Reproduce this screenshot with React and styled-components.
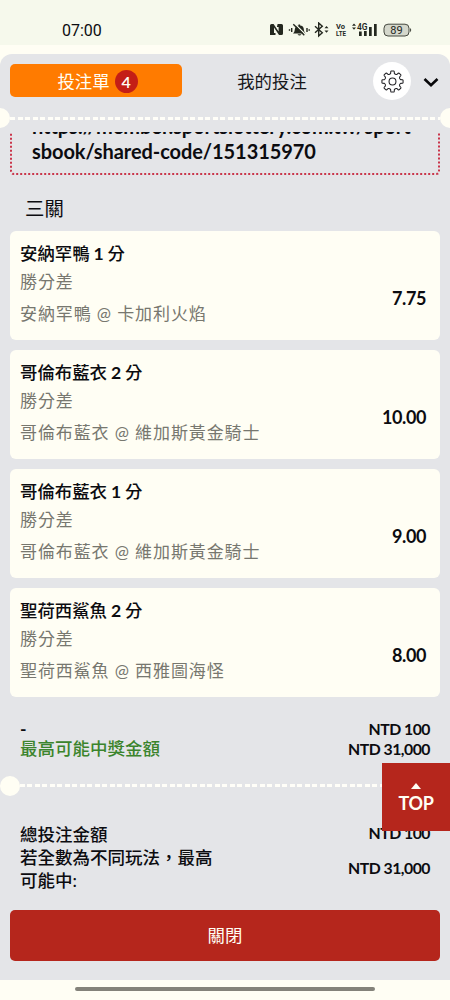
import React from 'react';
import styled, { createGlobalStyle } from 'styled-components';

const BETS = [
  { team: '安納罕鴨', margin: 1, match: '安納罕鴨 @ 卡加利火焰', odds: '7.75' },
  { team: '哥倫布藍衣', margin: 2, match: '哥倫布藍衣 @ 維加斯黃金騎士', odds: '10.00' },
  { team: '哥倫布藍衣', margin: 1, match: '哥倫布藍衣 @ 維加斯黃金騎士', odds: '9.00' },
  { team: '聖荷西鯊魚', margin: 2, match: '聖荷西鯊魚 @ 西雅圖海怪', odds: '8.00' },
];

const GlobalStyle = createGlobalStyle`
  * {
    box-sizing: border-box;
  }
  body {
    margin: 0;
    background: #fffef4;
    color: #0c0c10;
    font-family: Lato, "Noto Sans CJK TC", sans-serif;
  }
`;

const Screen = styled.div`
  width: 450px;
  height: 1000px;
  overflow: hidden;
  position: relative;
  display: flex;
  flex-direction: column;
`;

const StatusBar = styled.div`
  height: 45px;
  flex: none;
  padding: 15px 38px 0 62px;
  display: flex;
  justify-content: space-between;
  background: #f6f9ec;
`;

const Clock = styled.span`
  font: 16px/31px Roboto, sans-serif;
`;

const StatusSvg = styled.svg`
  margin-top: 7px;
  font-family: Roboto, sans-serif;
`;

const Panel = styled.main`
  height: 926px;
  flex: none;
  margin-top: 9px;
  border-radius: 12px 12px 0 0;
  background: #e4e5e8;
  display: flex;
  flex-direction: column;
`;

const Tabs = styled.div`
  height: 54px;
  flex: none;
  padding: 10px 10px 0;
  display: flex;
`;

const Tab = styled.button`
  width: ${props => (props.$active ? 172 : 180)}px;
  height: 33px;
  padding: ${props => (props.$active ? '1px 0 0 3px' : '1px 0 0')};
  border: 0;
  border-radius: 5px;
  display: flex;
  align-items: center;
  justify-content: center;
  gap: 5px;
  background: ${props => (props.$active ? '#ff7b00' : 'transparent')};
  color: ${props => (props.$active ? '#fffef4' : '#16161a')};
  font-family: inherit;
  font-size: 17.4px;
  line-height: 33px;
`;

const Count = styled.span`
  width: 23px;
  height: 23px;
  border-radius: 50%;
  background: #c41e16;
  font-size: 16px;
  font-weight: 600;
  line-height: 23px;
  text-align: center;
`;

const Settings = styled.button`
  width: 38px;
  height: 38px;
  margin: -2px 0 0 11px;
  padding: 0;
  border: 0;
  border-radius: 50%;
  background: #fff;
  display: flex;
  align-items: center;
  justify-content: center;
`;

const Chevron = styled.svg`
  margin: 13px 0 0 12px;
`;

const Divider = styled.div`
  height: 20px;
  flex: none;
  margin: ${props => (props.$inset ? '17px 0 0' : '0 -10px')};
  display: flex;
  align-items: center;
`;

const Notch = styled.span`
  width: 20px;
  height: 20px;
  flex: none;
  border-radius: 50%;
  background: #fffef4;
`;

const Dashes = styled.span`
  height: 3px;
  flex: 1;
  background: repeating-linear-gradient(90deg, #fffef8 0 5px, transparent 5px 7.5px);
`;

const ShareClip = styled.div`
  height: 43px;
  flex: none;
  margin: 4px 10px 0;
  overflow: hidden;
  display: flex;
  align-items: flex-end;
`;

const ShareBox = styled.div`
  width: 430px;
  border: 2px dotted #c9354a;
  border-radius: 4px;
  padding: 0 19px 10px 20px;
  font-size: 20px;
  font-weight: 700;
  letter-spacing: -0.08px;
  line-height: 24.5px;
  white-space: pre;
`;

const Heading = styled.h2`
  height: 55.9px;
  flex: none;
  margin: 0;
  padding: 6px 25px 0;
  font-size: 19.4px;
  font-weight: 400;
  line-height: 56px;
`;

const BetList = styled.div`
  flex: none;
  padding: 0 10px;
  display: flex;
  flex-direction: column;
  gap: 9.9px;
`;

const BetCard = styled.article`
  height: 109px;
  padding: 8px 14px 0 10px;
  border-radius: 6px;
  background: #fffef4;
  display: flex;
  justify-content: space-between;
`;

const Pick = styled.div`
  font-size: 17.4px;
  font-weight: 500;
  line-height: 30px;
`;

const Margin = styled.span`
  margin: 0 -0.5px;
  font-size: 17.6px;
  font-weight: 700;
`;

const Market = styled.div`
  color: #77776f;
  font-size: 17px;
  letter-spacing: 0.9px;
  line-height: 26px;
`;

const Match = styled(Market)`
  line-height: 37px;
`;

const Odds = styled.div`
  padding-top: 44px;
  font-size: 18px;
  font-weight: 700;
  letter-spacing: -0.4px;
  line-height: 30px;
`;

const Totals = styled.div`
  flex: none;
  padding: ${props => props.$top}px 20px 0;
  display: flex;
  justify-content: space-between;
  font-size: 17.5px;
  font-weight: 500;
  line-height: ${props => props.$line}px;
`;

const Labels = styled.div`
  width: 200px;
`;

const Dash = styled.div`
  font-weight: 700;
`;

const Green = styled.div`
  color: #3b842c;
`;

const Amounts = styled.div`
  display: flex;
  flex-direction: column;
  gap: ${props => props.$gap || 0}px;
  font-size: 15.8px;
  font-weight: 700;
  letter-spacing: -0.5px;
  line-height: 20px;
  text-align: right;
`;

const CloseButton = styled.button`
  height: 51px;
  flex: none;
  margin: auto 10px 19px;
  padding: 0 0 2px;
  border: 0;
  border-radius: 5px;
  background: #b5261c;
  color: #fffef4;
  font-family: inherit;
  font-size: 17.4px;
`;

const TopButton = styled.button`
  position: absolute;
  top: 763px;
  right: 0;
  width: 68px;
  height: 68px;
  padding: 20px 0 0;
  border: 0;
  background: #b5261c;
  color: #fffef4;
  display: flex;
  flex-direction: column;
  align-items: center;
  justify-content: flex-start;
  gap: 3px;
  font-family: inherit;
  font-size: 18px;
  font-weight: 700;
  letter-spacing: -0.4px;
  line-height: 22px;
`;

const HomeBar = styled.div`
  width: 300px;
  height: 4px;
  margin: 7px auto 0;
  border-radius: 2px;
  background: #84827a;
`;

const StatusIcons = () => (
  <StatusSvg width="142" height="16" viewBox="0 0 142 16" fill="#24281f">
    <path d="M0 3.5Q0 2 1.5 2H3.6l5 7.500V5H7V3.500h3.500V13H9L4 5.500V11h1.500v2H0zM7.500 2h4q1.500 0 1.500 1.500v8q0 1.500-1.500 1.500h-1V3.500h-3z" />
    <path d="M23 11.5c2-1.500 1.500-3.500 2-5 .6-2 2-3 3.500-3V2.500h1.600v1c2 0 3.200 1.200 3.600 3 .4 2 .1 3.500 2 5zM27.500 12.300h4q-2 2.400-4 0z" />
    <path d="m24.500 1.500 11 11" stroke="#f6f9ec" strokeWidth="1.2" />
    <path d="m23.300 2.300 11 11M21.700 6v4M19.500 7.300v1.400M37 6v4M39.200 7.300v1.400" fill="none" stroke="#24281f" strokeWidth="1.4" />
    <path d="m45 4.200 7.300 6.600-3.600 3.200V1l3.600 3.200L45 10.800" fill="none" stroke="#24281f" strokeWidth="1.4" />
    <path d="m54.500 6.300 2-2.300 2 2.300zM54.500 8.500h4l-2 2.300z" />
    <text x="66" y="6.500" fontSize="8" fontWeight="700" textLength="9" lengthAdjust="spacingAndGlyphs">Vo</text>
    <text x="66" y="14" fontSize="8" fontWeight="700" textLength="10" lengthAdjust="spacingAndGlyphs">LTE</text>
    <path d="m82 3.800 2-2.300 2 2.300zM82 5.500h4l-2 2.300zM89 9.500h2.700V14H89zM94 9h2.700v5H94zM99 5h2.700v9H99zM104 2h2.700v12H104z" />
    <text x="87" y="7.800" fontSize="9.500" fontWeight="600" textLength="10.500" lengthAdjust="spacingAndGlyphs">4G</text>
    <rect x="114" y="2.200" width="25" height="11.800" rx="4" fill="#d4d7cb" stroke="#45483f" />
    <path d="M140.200 6q2 2.100 0 4.200z" />
    <text x="126.500" y="12" fontSize="11" textAnchor="middle">89</text>
  </StatusSvg>
);

const Gear = () => (
  <svg width="23" height="23" viewBox="-12 -12 24 24" fill="none" stroke="#222226" strokeWidth="1.1" strokeLinejoin="round">
    <path
      d={[0, 45, 90, 135, 180, 225, 270, 315]
        .map((deg, i) => {
          const at = (r, a) => {
            const t = ((deg + a) * Math.PI) / 180;
            return `${(r * Math.sin(t)).toFixed(2)} ${(-r * Math.cos(t)).toFixed(2)}`;
          };
          return `${i ? 'L' : 'M'}${at(8.7, -13)} L${at(10.5, -10)} Q${at(11, -9)} ${at(11.1, -7)} L${at(11.1, 7)} Q${at(11, 9)} ${at(10.5, 10)} L${at(8.7, 13)} Q${at(7.6, 22.5)} ${at(8.7, 32)}`;
        })
        .join(' ') + 'Z'}
    />
    <circle r="3.6" />
  </svg>
);

const App = () => (
  <>
    <GlobalStyle />
    <Screen>
      <StatusBar>
        <Clock>07:00</Clock>
        <StatusIcons />
      </StatusBar>
      <Panel>
        <Tabs>
          <Tab $active>投注單<Count>4</Count></Tab>
          <Tab>我的投注</Tab>
          <Settings><Gear /></Settings>
          <Chevron width="16" height="11" viewBox="0 0 16 11" fill="none" stroke="#08080a" strokeWidth="2.6">
            <path d="m1.500 2 6.500 6.300L14.500 2" />
          </Chevron>
        </Tabs>
        <Divider>
          <Notch />
          <Dashes />
          <Notch />
        </Divider>
        <ShareClip>
          <ShareBox>{'https://member.sportslottery.com.tw/sport\nsbook/shared-code/151315970'}</ShareBox>
        </ShareClip>
        <Heading>三關</Heading>
        <BetList>
          {BETS.map(bet => (
            <BetCard key={bet.team + bet.margin}>
              <div>
                <Pick>{bet.team} <Margin>{bet.margin}</Margin> 分</Pick>
                <Market>勝分差</Market>
                <Match>{bet.match}</Match>
              </div>
              <Odds>{bet.odds}</Odds>
            </BetCard>
          ))}
        </BetList>
        <Totals $top={22} $line={20}>
          <Labels>
            <Dash>-</Dash>
            <Green>最高可能中獎金額</Green>
          </Labels>
          <Amounts>
            <div>NTD 100</div>
            <div>NTD 31,000</div>
          </Amounts>
        </Totals>
        <Divider $inset>
          <Notch />
          <Dashes />
          <Notch />
        </Divider>
        <Totals $top={27} $line={23}>
          <Labels>
            <div>總投注金額</div>
            <div>若全數為不同玩法，最高可能中:</div>
          </Labels>
          <Amounts $gap={15}>
            <div>NTD 100</div>
            <div>NTD 31,000</div>
          </Amounts>
        </Totals>
        <CloseButton>關閉</CloseButton>
      </Panel>
      <HomeBar />
      <TopButton>
        <svg width="10" height="6" viewBox="0 0 10 6"><path d="m5 0 5 6H0z" fill="#fffef4" /></svg>
        TOP
      </TopButton>
    </Screen>
  </>
);

export default App;
